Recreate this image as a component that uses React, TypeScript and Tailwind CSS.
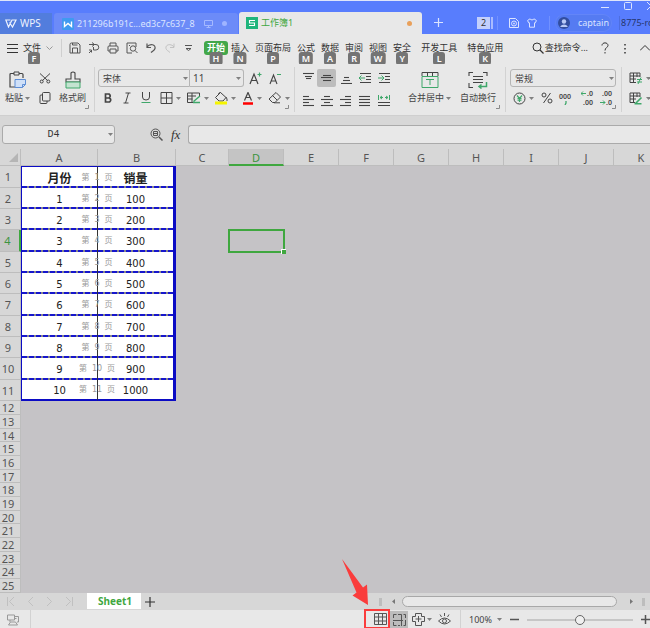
import { useState, type ReactNode } from "react";
import clsx from "clsx";

const columns = ["A", "B", "C", "D", "E", "F", "G", "H", "I", "J", "K"];

const data = [
  ["月份", "销量"],
  ["1", "100"],
  ["2", "200"],
  ["3", "300"],
  ["4", "400"],
  ["5", "500"],
  ["6", "600"],
  ["7", "700"],
  ["8", "800"],
  ["9", "900"],
  ["10", "1000"],
];

const emptyRows = Array.from({ length: 14 }, (_, i) => i + 12);

const menus = [
  { label: "插入", tip: "N" },
  { label: "页面布局", tip: "P" },
  { label: "公式", tip: "M" },
  { label: "数据", tip: "A" },
  { label: "审阅", tip: "R" },
  { label: "视图", tip: "W" },
  { label: "安全", tip: "Y" },
];

const extraMenus = [
  { label: "开发工具", tip: "L" },
  { label: "特色应用", tip: "K" },
];

function Icon({
  w = 14,
  h = 14,
  className,
  children,
}: {
  w?: number;
  h?: number;
  className?: string;
  children: ReactNode;
}) {
  return (
    <svg
      width={w}
      height={h}
      viewBox={`0 0 ${w} ${h}`}
      fill="none"
      stroke="currentColor"
      strokeWidth="1"
      className={clsx("shrink-0", className)}
      aria-hidden
    >
      {children}
    </svg>
  );
}

function Caret({ className }: { className?: string }) {
  return (
    <Icon w={5} h={3} className={clsx("text-[#808080]", className)}>
      <path d="M0 0h5L2.5 3z" fill="currentColor" stroke="none" />
    </Icon>
  );
}

function Tool({
  label,
  className,
  children,
}: {
  label: string;
  className?: string;
  children: ReactNode;
}) {
  return (
    <button
      type="button"
      aria-label={label}
      className={clsx("flex h-[18px] shrink-0 justify-center", className ?? "items-center")}
    >
      {children}
    </button>
  );
}

function DropTool({ label, children }: { label: string; children: ReactNode }) {
  return (
    <button
      type="button"
      aria-label={label}
      className="flex h-[18px] w-[27px] shrink-0 items-center justify-center gap-[3px]"
    >
      {children}
      <Caret />
    </button>
  );
}

function MenuItem({ label, tip }: { label: string; tip: string }) {
  return (
    <button type="button" className="relative whitespace-nowrap">
      {label}
      <KeyTip>{tip}</KeyTip>
    </button>
  );
}

function KeyTip({ children }: { children: ReactNode }) {
  return (
    <span className="absolute top-[11px] left-1/2 flex h-[13px] min-w-[12px] -translate-x-1/2 items-center justify-center rounded-[3px] bg-[#747474] px-[3px] text-[9px] leading-none font-semibold text-white">
      {children}
    </span>
  );
}

function Launcher() {
  return (
    <Icon w={4} h={4} className="absolute right-[5px] bottom-[3px] text-[#8a8a8a]">
      <path d="M3.5 0v3.5H0" />
    </Icon>
  );
}

function TitleBar() {
  return (
    <header className="flex h-[34px] items-end overflow-hidden border-t border-[#dfe5fa] bg-[#587dfd] text-[9px] text-[#dbe4ff]">
      <button type="button" className="flex h-[21px] w-[52px] shrink-0 items-center gap-[3px] bg-[#527ddd] pl-[5px] text-[10px] text-[#eef3ff]">
        <Icon w={12} h={9}>
          <path d="M5.500 1H.800L3.500 8 6 3M4.500 3.500L7.500 8l3.500-7H7L5.500 4" strokeWidth="1.200" />
        </Icon>
        WPS
      </button>
      <button type="button" className="ml-[2px] flex h-[21px] w-[184px] shrink-0 items-center rounded-t-[3px] bg-[#6c8bf8] pl-[8px]">
        <svg width="12" height="12" viewBox="0 0 12 12" className="shrink-0" aria-hidden>
          <rect width="12" height="12" rx="1" fill="#3f9af0" />
          <path d="M2.500 3.500v5L6 5.500l3.500 3v-5" fill="none" stroke="#fff" strokeWidth="1.400" />
        </svg>
        <span className="ml-[3px] whitespace-nowrap">211296b191c...ed3c7c637_8</span>
        <Icon w={9} h={9} className="ml-auto text-[#a5b9ff]">
          <path d="M.5 1.500h8v5h-8zM4.500 6.500v2M2.500 8.500h4" />
        </Icon>
        <span className="mr-[11px] ml-[9px] size-[5px] shrink-0 rounded-full bg-[#9fb4ff]" />
      </button>
      <button type="button" className="ml-px flex h-[22px] w-[183px] shrink-0 items-center rounded-t-[3px] bg-[#e8e8e8] pr-[10px] pl-[7px] text-[#3fa73f]">
        <svg width="12" height="12" viewBox="0 0 12 12" className="shrink-0" aria-hidden>
          <rect width="12" height="12" fill="#1fb57c" />
          <path d="M9 3.500H3.500V6h5v2.500H3" fill="none" stroke="#fff" strokeWidth="1.100" />
        </svg>
        <span className="ml-[3px]">工作簿1</span>
        <span className="ml-auto size-[5px] rounded-full bg-[#e9a05a]" />
      </button>
      <div className="flex h-full min-w-0 flex-1 flex-col">
        <div className="flex h-[9px] items-center justify-end gap-[15px]">
          <button type="button" aria-label="最小化"><Icon w={8} h={8}><path d="M0 5.500h8" /></Icon></button>
          <button type="button" aria-label="最大化"><Icon w={8} h={8}><rect x=".5" y=".5" width="7" height="7" rx="1" /></Icon></button>
          <button type="button" aria-label="关闭" className="w-[3px] overflow-hidden"><Icon w={8} h={8}><path d="M0 0l8 8M8 0L0 8" /></Icon></button>
        </div>
        <div className="flex flex-1 items-center pt-px pl-[12px]">
          <button type="button" aria-label="新建">
            <Icon w={9} h={9}><path d="M4.500 0v9M0 4.500h9" strokeWidth="1.200" /></Icon>
          </button>
          <span className="ml-[34px] flex h-[12px] w-[13px] shrink-0 items-center justify-center bg-[#c3d0fc] text-[#333]">2</span>
          <span className="ml-px h-[12px] w-[2px] shrink-0 bg-[#a9bbff]" />
          <span className="ml-[4px] h-[14px] w-px shrink-0 bg-[#7191ff]" />
          <Icon w={10} h={10} className="ml-[11px]">
            <path d="M.5 9.500V.5h6l3 3v6z" />
            <circle cx="5" cy="5.500" r="2.500" />
            <circle cx="5" cy="5.500" r=".6" />
          </Icon>
          <Icon w={10} h={10} className="ml-[8px]">
            <path d="M3 .8L.6 2.500l1 2.300H2.500v4.400h5V4.800h.9l1-2.300L7 .8C6 2.300 4 2.300 3 .8z" />
          </Icon>
          <span className="ml-[12px] h-[14px] w-px shrink-0 bg-[#7191ff]" />
          <button type="button" className="ml-[5px] flex h-[18px] w-[57px] shrink-0 items-center justify-between rounded-full border border-[#6385f8] bg-[#557bf2] px-[2px]">
            <svg width="12" height="12" viewBox="0 0 12 12" className="shrink-0" aria-hidden>
              <circle cx="6" cy="6" r="6" fill="#324d9f" />
              <circle cx="6" cy="4.500" r="2.200" fill="#b9c9f7" />
              <path d="M2.300 10c.4-3.500 7-3.500 7.400 0" fill="#b9c9f7" />
            </svg>
            captain
          </button>
          <span className="ml-[7px] h-[14px] w-px shrink-0 bg-[#4d6ee0]" />
          <span className="ml-px min-w-0 overflow-hidden whitespace-nowrap text-[#26366f]">8775-ro</span>
        </div>
      </div>
    </header>
  );
}

function MenuBar() {
  return (
    <nav className="flex h-[30px] items-center overflow-hidden pb-[2px] pl-[7px] text-[9px]">
      <button type="button" className="relative flex items-center gap-[5px] whitespace-nowrap">
        <Icon w={11} h={9}><path d="M0 .5h11M0 4.500h11M0 8.500h11" /></Icon>
        文件
        <Icon w={7} h={5} className="text-[#999]"><path d="M.5.5l3 3 3-3" /></Icon>
        <span className="absolute top-0 left-[27px]"><KeyTip>F</KeyTip></span>
      </button>
      <span className="ml-[8px] h-[18px] w-px shrink-0 bg-[#cfcfcf]" />
      <div className="ml-[7px] flex shrink-0 items-center gap-[7px] text-[#555]">
        <Tool label="保存">
          <Icon w={12} h={12}><path d="M1 2.500Q1 1 2.500 1h6.500L11 3v8H1zM3.500 11V6h5v5M3.500 1v2h5" /></Icon>
        </Tool>
        <Tool label="输出为PDF">
          <Icon w={12} h={12}><path d="M1 2.500h7a2.500 2.500 0 010 5.500H5.500V5M4 .5l2.500 2-2.500 2M1 8h2.500v2.500M1 11l3-3" /></Icon>
        </Tool>
        <Tool label="打印">
          <Icon w={12} h={12}><path d="M3 4V1h6v3M3 9H1V5q0-1 1-1h8q1 0 1 1v4H9M3 7h6v4H3z" /></Icon>
        </Tool>
        <Tool label="打印预览">
          <Icon w={12} h={12}><path d="M6 11H1V1h9v4" /><circle cx="7" cy="6.500" r="2.700" /><path d="M9 8.500l2.500 2.500M3 3.500h1" /></Icon>
        </Tool>
        <Tool label="撤销">
          <Icon w={12} h={12}><path d="M2 1.500v4h4M2 5c3-4 9-2.500 8 1.500C9.500 8.500 7.500 9 6 10.500" strokeWidth="1.200" /></Icon>
        </Tool>
        <Tool label="恢复" className="items-center text-[#c2c2c2]">
          <Icon w={12} h={12}><path d="M10 1.500v4H6M10 5C7 1 1 2.500 2 6.500 2.500 8.500 4.500 9 6 10.500" /></Icon>
        </Tool>
        <Tool label="更多" className="ml-[2px] items-center">
          <Icon w={7} h={8}><path d="M0 1.500h7" /><path d="M1 4.500h5l-2.500 2z" /></Icon>
        </Tool>
      </div>
      <button type="button" className="relative ml-[12px] h-[14px] w-[24px] shrink-0 rounded-[3px] bg-[#42a749] font-bold text-white">
        开始
        <KeyTip>H</KeyTip>
      </button>
      <div className="ml-[3px] flex shrink-0 gap-[6px]">
        {menus.map((m) => <MenuItem key={m.label} {...m} />)}
      </div>
      <div className="ml-[10px] flex shrink-0 gap-[10px]">
        {extraMenus.map((m) => <MenuItem key={m.label} {...m} />)}
      </div>
      <button type="button" className="ml-auto flex shrink-0 items-center gap-px whitespace-nowrap">
        <Icon w={12} h={12}><circle cx="5" cy="5" r="4" /><path d="M8 8l3.500 3.500" strokeWidth="1.200" /></Icon>
        查找命令...
      </button>
      <button type="button" aria-label="帮助" className="ml-[13px]">
        <Icon w={8} h={12}><path d="M1 3.500C1 0 7 0 7 3.500 7 5.500 4 5.500 4 8.500M4 10v1.500" /></Icon>
      </button>
      <button type="button" aria-label="更多选项" className="ml-[14px]">
        <Icon w={4} h={11}><path d="M2 1v1.500M2 5v1.500M2 9v1.500" strokeWidth="1.500" /></Icon>
      </button>
      <button type="button" aria-label="收起功能区" className="ml-[13px]">
        <Icon w={10} h={8}><path d="M0 6.500l5-5 5 5" /></Icon>
      </button>
    </nav>
  );
}

function AlignIcon({ lines }: { lines: number[][] }) {
  return (
    <Icon w={12} h={12}>
      {lines.map(([y, x1, x2], i) => <path key={i} d={`M${x1} ${y + 0.5}H${x2}`} strokeWidth="1.100" />)}
    </Icon>
  );
}

function Ribbon() {
  return (
    <section className="flex h-[52px] overflow-hidden border-b border-[#cfcfcf] text-[9px] text-[#444] *:shrink-0">
      {/* clipboard */}
      <div className="relative my-[3px] flex w-[95px] border-r border-[#d2d2d2] pt-[2px] pl-[5px]">
        <button type="button" className="flex w-[26px] flex-col items-start gap-[3px] pt-[2px]">
          <Icon w={18} h={18} className="ml-[4px]">
            <path d="M5 2.500H2Q1 2.500 1 3.500V16h6M10 2.500h3q1 0 1 1V7" strokeWidth="1.200" />
            <path d="M5 1h5v3H5z" />
            <path d="M6 8.500h10.500v5l-3 3H6z" fill="#cfe0f8" stroke="#5e8ed6" />
            <path d="M13.500 16.500v-3h3" stroke="#5e8ed6" />
          </Icon>
          <span className="flex items-center gap-[2px] leading-[12px] whitespace-nowrap">粘贴<Caret /></span>
        </button>
        <div className="ml-[8px] flex flex-col gap-[2px]">
          <Tool label="剪切">
            <Icon w={12} h={12}><path d="M1 1.500l7.500 7M11 1.500l-7.500 7" /><circle cx="2.700" cy="9.500" r="1.500" /><circle cx="9.300" cy="9.500" r="1.500" /></Icon>
          </Tool>
          <Tool label="复制">
            <Icon w={12} h={12}><rect x="3.500" y=".5" width="7.500" height="8.500" rx="1" /><path d="M3.500 3H2Q1 3 1 4v6.500q0 1 1 1h5q1 0 1-1V9" /></Icon>
          </Tool>
        </div>
        <button type="button" className="ml-[8px] flex flex-col items-center gap-[3px] pt-[2px]">
          <Icon w={18} h={18}>
            <path d="M7 8V2q2-2 4 0v6h5v3H2V8z" strokeWidth="1.100" />
            <path d="M2 11h14v6H2z" fill="#c3e3d0" stroke="#3fa76a" />
          </Icon>
          <span className="leading-[12px] whitespace-nowrap">格式刷</span>
        </button>
        <Launcher />
      </div>

      {/* font */}
      <div className="relative my-[3px] flex w-[200px] flex-col gap-[2px] border-r border-[#d2d2d2] pt-[2px] pl-[3px]">
        <div className="flex items-center">
          <div className="relative">
            <select aria-label="字体" className="block h-[18px] w-[92px] appearance-none rounded-l-[3px] border border-[#b5b5b5] pl-[4px] leading-none outline-none">
              <option>宋体</option>
            </select>
            <Caret className="pointer-events-none absolute top-[8px] right-[2px]" />
          </div>
          <div className="relative">
            <select aria-label="字号" className="block h-[18px] w-[54px] appearance-none rounded-r-[3px] border border-l-0 border-[#b5b5b5] pl-[3px] text-[10px] leading-none outline-none">
              <option>11</option>
            </select>
            <Caret className="pointer-events-none absolute top-[8px] right-[3px]" />
          </div>
          <Tool label="增大字号" className="ml-[5px] items-center">
            <Icon w={13} h={13}><path d="M1 12L5 2l4 10M2.500 8.500h5" strokeWidth="1.200" /><path d="M10.500.5v4M8.500 2.500h4" stroke="#3fa76a" strokeWidth="1.200" /></Icon>
          </Tool>
          <Tool label="减小字号" className="ml-[7px] items-center">
            <Icon w={12} h={13}><path d="M1 12L4.500 3 8 12M2.200 9h4.600" strokeWidth="1.100" /><path d="M8 2.500h4" stroke="#3fa76a" /></Icon>
          </Tool>
        </div>
        <div className="flex items-center">
          <Tool label="加粗" className="w-[19px] items-center">
            <Icon w={10} h={10}><path d="M2.500 1H6q2.500 2 0 4H2.500zM2.500 5h4q2.500 2 0 4h-4z" strokeWidth="1.700" /></Icon>
          </Tool>
          <Tool label="倾斜" className="w-[19px] items-center">
            <Icon w={10} h={12}><path d="M3.500 1h5M1.500 11h5M6.500 1l-3 10" /></Icon>
          </Tool>
          <Tool label="下划线" className="w-[19px] items-center">
            <Icon w={10} h={12}><path d="M1.500 0v5q0 3 3.500 3t3.500-3V0" /><path d="M.5 10.500h9" stroke="#3fa76a" /></Icon>
          </Tool>
          <div className="flex pl-[2px]">
            <DropTool label="边框"><Icon w={13} h={12}><path d="M1 .5h11v11H1zM6.500.5v11M1 6h11" /></Icon></DropTool>
            <DropTool label="绘图边框">
              <Icon w={14} h={12}><path d="M6 10.500H.5V1h12v3M.5 4H9M.5 7h5M5 1v9" /><path d="M6.500 9.500L13 4M6 10.500h7" stroke="#3fa76a" strokeWidth="1.400" /></Icon>
            </DropTool>
            <DropTool label="填充颜色">
              <Icon w={14} h={13}><path d="M6.500.5L1.500 5.500 5 9h4l3-3.500zM12 5q1.500 2 1 4M6.500.5q-2 0-2 2" /><path d="M1 11h12" stroke="#f5f500" strokeWidth="3" /></Icon>
            </DropTool>
            <DropTool label="字体颜色">
              <Icon w={12} h={13}><path d="M2.500 8.500L6 .5l3.500 8M4 5.500h4" strokeWidth="1.200" /><path d="M1 11.500h10" stroke="#f00" strokeWidth="2.500" /></Icon>
            </DropTool>
            <DropTool label="清除"><Icon w={14} h={12}><path d="M8 .5L12.500 5 7 10.500H4.500L1 7zM4.500 3.500L9 8M6 10.800h6" /></Icon></DropTool>
          </div>
        </div>
        <Launcher />
      </div>

      {/* alignment */}
      <div className="relative my-[3px] flex w-[211px] border-r border-[#d2d2d2] pt-[2px] pl-[3px]">
        <div className="grid grid-cols-[19px_19px_19px_19px_19px] gap-y-[2px]">
          <Tool label="顶端对齐"><AlignIcon lines={[[1, 1, 12], [4, 3, 10], [6, 4, 9]]} /></Tool>
          <Tool label="垂直居中" className="items-center rounded-[2px] bg-[#bcbcbc]"><AlignIcon lines={[[3, 2, 10], [5, 0, 12], [8, 2, 10]]} /></Tool>
          <Tool label="底端对齐"><AlignIcon lines={[[5, 4, 9], [8, 3, 10], [11, 1, 12]]} /></Tool>
          <Tool label="减少缩进"><Icon w={12} h={12}><path d="M1 1.500h11M7 4.500h5M7 7.500h5M1 10.500h11" /><path d="M0 6h6M2.500 3.500L0 6l2.500 2.500" stroke="#3fa76a" /></Icon></Tool>
          <Tool label="增加缩进"><Icon w={12} h={12}><path d="M1 1.500h11M7 4.500h5M7 7.500h5M1 10.500h11" /><path d="M0 6h6M3.500 3.500L6 6 3.500 8.500" stroke="#3fa76a" /></Icon></Tool>
          <Tool label="左对齐"><AlignIcon lines={[[1, 1, 7], [4, 1, 12], [7, 1, 7], [10, 1, 12]]} /></Tool>
          <Tool label="水平居中"><AlignIcon lines={[[1, 3, 9], [4, 0, 12], [7, 3, 9], [10, 0, 12]]} /></Tool>
          <Tool label="右对齐"><AlignIcon lines={[[1, 5, 11], [4, 0, 11], [7, 5, 11], [10, 0, 11]]} /></Tool>
          <Tool label="两端对齐"><AlignIcon lines={[[1, 0, 11], [4, 0, 11], [7, 0, 11], [10, 0, 11]]} /></Tool>
          <Tool label="分散对齐"><Icon w={12} h={12}><path d="M0 7.500h12M0 10.500h12" /><path d="M.5 0v5M11.500 0v5M2 2.500h3M7 2.500h3M4 1L2 2.500 4 4M8 1l2 1.500L8 4" stroke="#3fa76a" /></Icon></Tool>
        </div>
        <button type="button" className="ml-[15px] flex flex-col items-center gap-[3px] pt-[2px]">
          <Icon w={18} h={18}>
            <path d="M1 5V1.500h16V5M6.500 1.500V5M11.500 1.500V5" />
            <path d="M1 5.500h16v11H1zM5 8.500h8M9 8.500V14" stroke="#3fa76a" />
          </Icon>
          <span className="flex items-center gap-[2px] leading-[12px] whitespace-nowrap">合并居中<Caret /></span>
        </button>
        <button type="button" className="ml-[9px] flex flex-col items-center gap-[3px] pt-[2px]">
          <Icon w={20} h={18}>
            <path d="M1 5V1.500h4M15 1.500h4V5M1 12v4.500h4M5 5.500h10M5 8.500h10M5 11.500h10" strokeWidth="1.100" />
            <path d="M18.500 11v4.500H11M13.500 13.500l-2.500 2 2.500 2" stroke="#3fa76a" strokeWidth="1.500" />
          </Icon>
          <span className="leading-[12px] whitespace-nowrap">自动换行</span>
        </button>
        <Launcher />
      </div>

      {/* number format */}
      <div className="relative my-[3px] flex w-[116px] flex-col gap-[2px] border-r border-[#d2d2d2] pt-[2px] pl-[4px]">
        <div className="relative">
          <select aria-label="数字格式" className="block h-[18px] w-[106px] appearance-none rounded-[3px] border border-[#b5b5b5] pl-[4px] leading-none outline-none">
            <option>常规</option>
          </select>
          <Caret className="pointer-events-none absolute top-[8px] right-[7px]" />
        </div>
        <div className="flex items-center gap-px">
          <DropTool label="货币">
            <Icon w={13} h={13}><circle cx="6.500" cy="6.500" r="5.500" /><path d="M4 3.500l2.500 3 2.500-3M6.500 6.500V10M4.500 6.500h4M4.500 8.200h4" stroke="#3fa76a" strokeWidth="1.200" /></Icon>
          </DropTool>
          <Tool label="百分比" className="w-[17px] items-center">
            <Icon w={12} h={12}><circle cx="3" cy="3" r="2" /><circle cx="9" cy="9" r="2" /><path d="M9.500 1l-7 10" /></Icon>
          </Tool>
          <Tool label="千位分隔" className="w-[18px] flex-col items-center">
            <span className="text-[7px] leading-[9px] font-semibold">000</span>
            <Icon w={3} h={4}><path d="M2 0v2L1 4" stroke="#3fa76a" strokeWidth="1.300" /></Icon>
          </Tool>
          <Tool label="增加小数位" className="w-[18px] flex-col items-end">
            <span className="flex items-center text-[7px] leading-[9px] font-semibold">
              <Icon w={6} h={5}><path d="M0 2.500h5M2 .5l-2 2 2 2" stroke="#3fa76a" /></Icon>.0
            </span>
            <span className="text-[7px] leading-[9px] font-semibold">.00</span>
          </Tool>
          <Tool label="减少小数位" className="w-[18px] flex-col items-end">
            <span className="text-[7px] leading-[9px] font-semibold">.00</span>
            <span className="flex items-center text-[7px] leading-[9px] font-semibold">
              <Icon w={6} h={5}><path d="M0 2.500h5M3 .5l2 2-2 2" stroke="#3fa76a" /></Icon>.0
            </span>
          </Tool>
        </div>
        <Launcher />
      </div>

      {/* styles */}
      <div className="flex flex-col gap-[2px] pt-[5px] pl-[4px]">
        <DropTool label="条件格式">
          <Icon w={14} h={13}><path d="M7 10.500H1V1h10v4M1 4h10M1 7h6M4.500 1v9.500M8 1v4" /><path d="M8 7.500h5M8 10h5M12 5.500L9 12" stroke="#3fa76a" /></Icon>
        </DropTool>
        <DropTool label="表格样式">
          <Icon w={14} h={13}><path d="M6 10.500H1V1h10v4M1 4h10M1 7h6M4.500 1v9.500M8 1v4" /><path d="M6.500 11.500l6-6M5.500 11.800h7" stroke="#3fa76a" strokeWidth="1.600" /></Icon>
        </DropTool>
      </div>
    </section>
  );
}

function FormulaBar() {
  return (
    <div className="flex h-[33px] items-center bg-[#d7d7d7] pt-[3px] pl-[2px]">
      <div className="relative">
        <input
          aria-label="名称框"
          defaultValue="D4"
          className="block h-[19px] w-[113px] rounded-[3px] border border-[#aaa] bg-[#e8e8e8] pr-[10px] text-center font-['Liberation_Mono',monospace] text-[10px] outline-none"
        />
        <Caret className="absolute top-[8px] right-[2px]" />
      </div>
      <button type="button" aria-label="浏览" className="ml-[35px] text-[#555]">
        <Icon w={13} h={13}>
          <circle cx="5.500" cy="5.500" r="4.500" />
          <path d="M9 9l3.500 3.500" strokeWidth="1.500" />
          <path d="M3.500 3.500h4v4h-4zM3.500 5.500h4" />
        </Icon>
      </button>
      <label htmlFor="formula" className="ml-[8px] w-[17px] font-['Liberation_Serif',serif] text-[13px] leading-none italic">fx</label>
      <input id="formula" className="h-[19px] min-w-0 flex-1 rounded-l-[3px] border border-r-0 border-[#aaa] bg-[#e8e8e8] px-1 outline-none" />
    </div>
  );
}

function RowHead({ n }: { n: number }) {
  return (
    <th
      scope="row"
      className={clsx(
        "border-b border-[#bdbdbd] p-0 pr-[4px] text-center text-[11px] leading-none font-normal",
        n === 4
          ? "border-r-2 border-r-[#3fa73f] bg-[#c6c6c6] text-[#3b9440]"
          : "border-r bg-[#d7d7d7] text-[#555]"
      )}
    >
      {n}
    </th>
  );
}

function Sheet() {
  return (
    <main className="flex-1 overflow-hidden bg-[#c5c3c6]">
      <table className="w-[669px] table-fixed border-separate border-spacing-0">
        <colgroup>
          <col className="w-[21px]" />
          <col className="w-[77px]" />
          <col className="w-[78px]" />
          <col className="w-[53px]" />
          {columns.slice(3).map((c) => <col key={c} />)}
        </colgroup>
        <thead>
          <tr className="h-[17px] bg-[#d7d7d7]">
            <th className="border-r border-b border-[#bdbdbd] p-0 pr-[2px]" aria-label="全选">
              <Icon w={9} h={9} className="ml-auto text-[#b5b5b5]">
                <path d="M9 0v9H0z" fill="currentColor" stroke="none" />
              </Icon>
            </th>
            {columns.map((c) => (
              <th
                key={c}
                scope="col"
                className={clsx(
                  "border-r border-r-[#bdbdbd] p-0 text-[11px] leading-none font-normal",
                  c === "D"
                    ? "border-b-2 border-b-[#3fa73f] bg-[#c4c4c4] pt-px text-[#3b9440]"
                    : "border-b border-b-[#bdbdbd] text-[#555]"
                )}
              >
                {c}
              </th>
            ))}
          </tr>
        </thead>
        <tbody>
          {data.map(([month, sales], i) => {
            const last = i === data.length - 1;
            const cell = clsx(
              "border-[#0b0bc4] bg-white p-0 pt-[2px] text-center font-['DejaVu_Sans','Noto_Sans_CJK_SC',sans-serif] leading-none text-[#222]",
              i === 0 ? "border-t text-[12px] font-bold" : "text-[10px]",
              last
                ? "border-b-2 pt-0"
                : "bg-[repeating-linear-gradient(90deg,#1616cc_0_5px,#8a8a8a_5px_7px)] bg-[length:100%_2px] bg-bottom bg-no-repeat"
            );
            return (
              <tr key={month} className={i % 3 === 0 ? "h-[22px]" : "h-[21px]"}>
                <RowHead n={i + 1} />
                <td className={clsx(cell, "relative border-r border-l border-r-[#333]")}>
                  {month}
                  <span
                    className="absolute top-1/2 right-0 flex translate-x-1/2 -translate-y-1/2 gap-[5px] text-[8px] leading-none font-normal text-[#999]"
                    aria-hidden
                  >
                    <span>第</span>
                    <span>{i + 1}</span>
                    <span>页</span>
                  </span>
                </td>
                <td className={clsx(cell, "border-r-[3px]")}>{sales}</td>
                {columns.slice(2).map((c) => (
                  <td key={c} className="relative p-0">
                    {c === "D" && i === 3 && (
                      <span className="absolute -inset-px border-2 border-[#3fa73f]">
                        <span className="absolute -right-[3px] -bottom-[3px] size-[5px] border-t border-l border-white bg-[#3fa73f]" />
                      </span>
                    )}
                  </td>
                ))}
              </tr>
            );
          })}
          {emptyRows.map((n) => (
            <tr key={n} className={n % 3 === 2 ? "h-[13px]" : "h-[14px]"}>
              <RowHead n={n} />
              <td colSpan={11} className="p-0" />
            </tr>
          ))}
        </tbody>
      </table>
    </main>
  );
}

function SheetTabs() {
  return (
    <div className="flex h-[17px] items-center bg-[#d7d7d7] pl-[7px]">
      <div className="flex gap-[12px] text-[#c0c0c0]">
        <button type="button" aria-label="首个"><Icon w={8} h={9}><path d="M.5 0v9M7 0L2.500 4.500 7 9" /></Icon></button>
        <button type="button" aria-label="上一个"><Icon w={7} h={9}><path d="M6 0L1.500 4.500 6 9" /></Icon></button>
        <button type="button" aria-label="下一个"><Icon w={7} h={9}><path d="M1 0l4.500 4.500L1 9" /></Icon></button>
        <button type="button" aria-label="末个"><Icon w={8} h={9}><path d="M7.500 0v9M1 0l4.500 4.500L1 9" /></Icon></button>
      </div>
      <button type="button" className="ml-[14px] h-[16px] w-[54px] self-start bg-white pl-[2px] text-[10px] leading-[16px] font-bold text-[#3fa73f]">
        Sheet1
      </button>
      <button type="button" aria-label="新建工作表" className="ml-[4px]">
        <Icon w={10} h={10}><path d="M5 0v10M0 5h10" strokeWidth="1.200" /></Icon>
      </button>
      <div className="ml-auto flex items-center pr-[5px]">
        <span className="h-[8px] w-[3px] bg-[#bdbdbd]" />
        <button type="button" aria-label="向左滚动" className="ml-[10px]">
          <Icon w={3} h={5}><path d="M3 0v5L0 2.500z" fill="#777" stroke="none" /></Icon>
        </button>
        <span className="ml-[7px] h-[11px] w-[215px] rounded-full border border-[#a8a8a8] bg-[#e8e8e8]" />
        <button type="button" aria-label="向右滚动" className="ml-[13px]">
          <Icon w={3} h={5}><path d="M0 0v5l3-2.500z" fill="#777" stroke="none" /></Icon>
        </button>
        <span className="ml-[9px] h-[8px] w-[3px] bg-[#bdbdbd]" />
      </div>
    </div>
  );
}

function StatusBar() {
  const [zoom, setZoom] = useState(50);

  return (
    <footer className="relative flex h-[19px] items-center bg-[#e8e8e8] pl-[7px] text-[#555]">
      <Icon w={13} h={12} className="text-[#999]">
        <path d="M.5 1h7v5h-7zM3 6v2M7.500 2.500h4V8H10M1.500 11l2-3h5l2 3zM7.500 4.500h2" />
      </Icon>
      <span className="ml-[10px] h-full w-px bg-[#d2d2d2]" />
      <div className="ml-auto flex h-full items-center">
        <button type="button" aria-label="普通视图" className="-mt-px flex h-[20px] w-[26px] items-center justify-end border-2 border-[#fa3c3c] pr-px">
          <Icon w={13} h={12}><path d="M.5.5h12v11H.5zM.5 4h12M.5 8h12M4.500.5v11M8.500.5v11" /></Icon>
        </button>
        <button type="button" aria-label="分页预览" className="flex h-[17px] w-[18px] items-center justify-center bg-[#bcbcbc]">
          <Icon w={13} h={12}><path d="M3.500.5h-3V4M.5 8v3.500h3M5 .5h3.500V12M0 6.500h10M10.500.5h2V4M12.500 6v5.500h-2M5 11.500h2" /></Icon>
        </button>
        <button type="button" aria-label="页面布局" className="ml-[4px] flex items-center gap-[2px]">
          <Icon w={13} h={13}><path d="M3.500 3.500v-3h6v3h3v5h-3v4h-6v-4h-3v-5zM6.500 3v6M3.500 6h6" /></Icon>
          <Caret />
        </button>
        <button type="button" aria-label="护眼模式" className="ml-[6px]">
          <Icon w={13} h={13}><path d="M.5 8q6-6 12 0-6 6-12 0zM6.500 0v3M2 1.500l1.500 2.500M11 1.500L9.500 4" /><circle cx="6.500" cy="8" r="2" /></Icon>
        </button>
        <span className="ml-[9px] h-full w-px bg-[#d2d2d2]" />
        <button type="button" className="ml-[8px] flex items-center gap-[5px] text-[9px] leading-none text-[#444]">
          100%<Caret />
        </button>
        <button type="button" aria-label="缩小" className="ml-[8px]">
          <Icon w={9} h={9}><path d="M0 4.500h9" strokeWidth="1.500" /></Icon>
        </button>
        <input
          type="range"
          aria-label="缩放"
          value={zoom}
          onChange={(e) => setZoom(Number(e.target.value))}
          className="mx-[8px] h-[2px] w-[106px] appearance-none bg-[#c6c6c6] [&::-webkit-slider-thumb]:size-[10px] [&::-webkit-slider-thumb]:appearance-none [&::-webkit-slider-thumb]:rounded-full [&::-webkit-slider-thumb]:border [&::-webkit-slider-thumb]:border-[#666] [&::-webkit-slider-thumb]:bg-[#f0f0f0]"
        />
        <button type="button" aria-label="放大">
          <Icon w={9} h={9}><path d="M0 4.500h9M4.500 0v9" strokeWidth="1.500" /></Icon>
        </button>
      </div>
      {/* callout arrow pointing at the normal view button */}
      <svg width="28" height="48" viewBox="0 0 28 48" className="pointer-events-none absolute right-[280px] bottom-[22px]" aria-hidden>
        <path d="M0 0l21 28.500 4-3 1 20.500L10.500 36.500l4-3z" fill="#fa3c3c" />
      </svg>
    </footer>
  );
}

export default function App() {
  return (
    <div className="flex min-h-screen flex-col overflow-hidden bg-[#e8e8e8] font-['Noto_Sans','Noto_Sans_CJK_SC',sans-serif] text-[#333]">
      <TitleBar />
      <MenuBar />
      <Ribbon />
      <FormulaBar />
      <Sheet />
      <SheetTabs />
      <StatusBar />
    </div>
  );
}
